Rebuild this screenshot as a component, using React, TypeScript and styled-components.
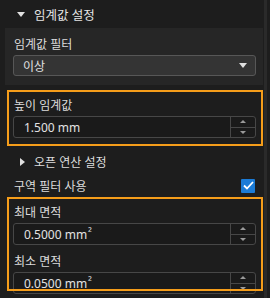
import * as React from 'react';
import styled, { createGlobalStyle } from 'styled-components';

const GlobalStyle = createGlobalStyle`
  html, body {
    margin: 0;
    padding: 0;
    background: #1d1d1d;
  }
  body {
    font-family: "Noto Sans", "Noto Sans CJK KR", sans-serif;
  }
`;

const Screen = styled.div`
  display: flex;
  width: 270px;
  height: 298px;
  overflow: hidden;
  background: #1d1d1d;
  color: #dcdcdc;
  font-size: 12px;
`;

const Column = styled.div`
  display: flex;
  flex-direction: column;
  width: 264px;
  flex: none;
`;

const ScrollTrack = styled.div`
  width: 3px;
  flex: none;
  background: #2a2a2a;
`;

const SectionHeader = styled.div`
  display: flex;
  align-items: center;
  gap: 9px;
  height: 28px;
  padding-left: 17px;
  color: #e6e6e6;
  font-size: 12.5px;
`;

const Caret = styled.span<{ $dir: 'down' | 'right' }>`
  width: 0;
  height: 0;
  flex: none;
  ${({ $dir }) =>
    $dir === 'down'
      ? `border-left: 4px solid transparent;
         border-right: 4px solid transparent;
         border-top: 5px solid #e0e0e0;`
      : `border-top: 4px solid transparent;
         border-bottom: 4px solid transparent;
         border-left: 5px solid #e0e0e0;`}
`;

const Panel = styled.div`
  display: flex;
  flex-direction: column;
  margin-left: 5px;
  width: 258px;
  box-sizing: border-box;
  padding: 5px 7px 9px 8px;
  background: #262626;
`;

const FieldLabel = styled.div`
  display: flex;
  align-items: center;
  height: 22px;
  padding-left: 1px;
`;

const Dropdown = styled.div`
  display: flex;
  align-items: center;
  justify-content: space-between;
  height: 21px;
  box-sizing: border-box;
  padding: 0 8px 0 9px;
  border: 1px solid #575757;
  border-radius: 3px;
  background: #343434;
  color: #e0e0e0;
`;

const Highlight = styled.div<{ $bottom: number }>`
  position: relative;
  display: flex;
  flex-direction: column;
  padding: 4px 8px 0 13px;

  &::after {
    content: '';
    position: absolute;
    top: 0;
    left: 7px;
    right: 1px;
    bottom: ${({ $bottom }) => $bottom}px;
    border: 2px solid #f59d1a;
    pointer-events: none;
  }
`;

const SpinInput = styled.div<{ $gapAfter?: number }>`
  display: flex;
  height: 22px;
  box-sizing: border-box;
  border: 1px solid #474747;
  border-radius: 3px;
  background: #1a1a1a;
  margin-bottom: ${({ $gapAfter }) => $gapAfter ?? 0}px;
  flex: none;
`;

const SpinValue = styled.div`
  flex: 1;
  display: flex;
  align-items: center;
  padding-left: 10px;
  color: #e2e2e2;
`;

const Sup = styled.span`
  font-size: 11px;
  line-height: 1;
  align-self: flex-start;
  margin-top: 2px;
  margin-left: 1px;
`;

const Spinner = styled.div`
  display: flex;
  flex-direction: column;
  width: 24px;
  border-left: 1px solid #474747;
`;

const SpinHalf = styled.div<{ $up?: boolean }>`
  flex: 1;
  display: flex;
  align-items: center;
  justify-content: center;
  ${({ $up }) => ($up ? 'border-bottom: 1px solid #474747;' : '')}

  &::before {
    content: '';
    width: 0;
    height: 0;
    border-left: 3px solid transparent;
    border-right: 3px solid transparent;
    ${({ $up }) =>
      $up ? 'border-bottom: 3px solid #9a9a9a;' : 'border-top: 3px solid #9a9a9a;'}
  }
`;

const ToggleRow = styled.div`
  display: flex;
  align-items: center;
  gap: 9px;
  height: 24px;
  margin-top: 4px;
  padding-left: 20px;
`;

const CheckRow = styled.div`
  display: flex;
  align-items: center;
  justify-content: space-between;
  height: 23px;
  padding: 0 9px 0 14px;
`;

const CheckBox = styled.span`
  display: flex;
  align-items: center;
  justify-content: center;
  width: 14px;
  height: 14px;
  background: #1b7bd6;
  border-radius: 1px;
`;

function NumberField({ value, unit2, gapAfter }: { value: string; unit2?: boolean; gapAfter?: number }) {
  return (
    <SpinInput $gapAfter={gapAfter}>
      <SpinValue>
        {value}
        {unit2 && <Sup>²</Sup>}
      </SpinValue>
      <Spinner>
        <SpinHalf $up />
        <SpinHalf />
      </Spinner>
    </SpinInput>
  );
}

export default function App() {
  return (
    <>
      <GlobalStyle />
      <Screen>
        <Column>
          <SectionHeader>
            <Caret $dir="down" />
            임계값 설정
          </SectionHeader>

          <Panel>
            <FieldLabel>임계값 필터</FieldLabel>
            <Dropdown>
              이상
              <Caret $dir="down" />
            </Dropdown>
          </Panel>

          <Highlight $bottom={0} style={{ marginTop: 5, paddingBottom: 8 }}>
            <FieldLabel>높이 임계값</FieldLabel>
            <NumberField value="1.500 mm" />
          </Highlight>

          <ToggleRow>
            <Caret $dir="right" />
            오픈 연산 설정
          </ToggleRow>

          <CheckRow>
            구역 필터 사용
            <CheckBox>
              <svg width="11" height="9" viewBox="0 0 11 9">
                <path d="M1 4.5 L4 7.5 L10 1" fill="none" stroke="#fff" strokeWidth="1.8" />
              </svg>
            </CheckBox>
          </CheckRow>

          <Highlight $bottom={3}>
            <FieldLabel>최대 면적</FieldLabel>
            <NumberField value="0.5000 mm" unit2 gapAfter={5} />
            <FieldLabel>최소 면적</FieldLabel>
            <NumberField value="0.0500 mm" unit2 />
          </Highlight>
        </Column>
        <ScrollTrack />
      </Screen>
    </>
  );
}
